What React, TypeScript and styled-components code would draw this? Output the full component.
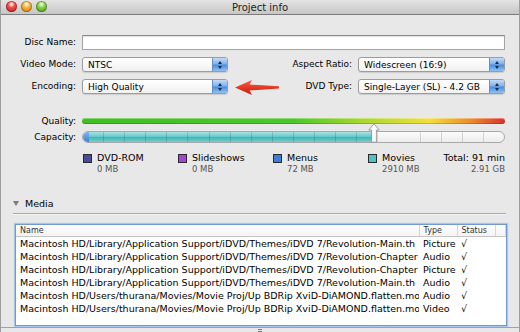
import styled, { createGlobalStyle } from 'styled-components';

const GlobalStyle = createGlobalStyle`
  html, body {
    margin: 0;
    padding: 0;
    background: #e8e8e8;
  }
  body {
    font-family: "DejaVu Sans", "Lucida Grande", sans-serif;
    color: #000;
  }
  * { box-sizing: border-box; }
`;

const Window = styled.div`
  width: 520px;
  height: 332px;
  overflow: hidden;
  background: #e8e8e8;
  border-left: 1px solid #9e9e9e;
  border-right: 1px solid #9e9e9e;
  display: flex;
  flex-direction: column;
`;

const TitleBar = styled.div`
  position: relative;
  height: 15px;
  flex: none;
  display: flex;
  align-items: center;
  justify-content: center;
  background: linear-gradient(#e4e4e4, #c6c6c6);
  border-bottom: 1px solid #7c7c7c;
`;

const Lights = styled.div`
  position: absolute;
  left: 5px;
  top: 1px;
  display: flex;
  gap: 4px;
`;

const Light = styled.span<{ $c1: string; $c2: string }>`
  width: 11px;
  height: 11px;
  border-radius: 50%;
  background: radial-gradient(circle at 50% 30%, #fff 0, ${(p) => p.$c1} 35%, ${(p) => p.$c2} 100%);
  box-shadow: inset 0 0 0 1px rgba(0, 0, 0, 0.25);
`;

const Title = styled.span`
  font-size: 10px;
  color: #222;
`;

const Form = styled.div`
  display: grid;
  grid-template-columns: 70px 146px 1fr 147px;
  grid-auto-rows: 15px;
  column-gap: 6px;
  row-gap: 7px;
  padding: 20px 14px 0 5px;
`;

const Label = styled.div`
  font-size: 9px;
  line-height: 15px;
  text-align: right;
  white-space: nowrap;
`;

const TextField = styled.div`
  grid-column: 2 / 5;
  background: #fff;
  border: 1px solid #a4a4a4;
  border-top-color: #888;
  box-shadow: inset 0 1px 1px rgba(0, 0, 0, 0.12);
`;

const Popup = styled.div`
  display: flex;
  align-items: center;
  border: 1px solid #9c9c9c;
  border-radius: 3px;
  background: linear-gradient(#ffffff, #f1f1f1);
  box-shadow: 0 1px 1px rgba(0, 0, 0, 0.12);
  overflow: hidden;
`;

const PopupText = styled.span`
  flex: 1;
  padding-left: 5px;
  font-size: 9px;
  white-space: nowrap;
`;

const Stepper = styled.span`
  width: 15px;
  align-self: stretch;
  display: flex;
  flex-direction: column;
  align-items: center;
  justify-content: center;
  gap: 2px;
  background: linear-gradient(#c6dcf6, #7fb2ec 45%, #4a8de0 55%, #8fc2f4);
  border-left: 1px solid #6a8fc4;
`;

const Tri = styled.span<{ $up?: boolean }>`
  width: 0;
  height: 0;
  border-left: 2px solid transparent;
  border-right: 2px solid transparent;
  ${(p) => (p.$up ? 'border-bottom: 3px solid #1c2a44;' : 'border-top: 3px solid #1c2a44;')}
`;

const ArrowCell = styled.div`
  display: flex;
  align-items: center;
  justify-content: space-between;
`;

const Meters = styled.div`
  display: grid;
  grid-template-columns: 70px 1fr;
  grid-auto-rows: 12px;
  column-gap: 6px;
  row-gap: 4px;
  padding: 21px 14px 0 5px;
`;

const MeterLabel = styled.div`
  font-size: 9px;
  line-height: 12px;
  text-align: right;
`;

const QualityBar = styled.div`
  align-self: center;
  height: 6px;
  border-radius: 3px;
  background: linear-gradient(
    to right,
    #3fbf22 0%,
    #4cc82a 50%,
    #a6d82e 66%,
    #f1e03a 82%,
    #ec8a2c 92%,
    #d8332a 100%
  );
  box-shadow: inset 0 -1px 0 rgba(0, 0, 0, 0.18), inset 0 1px 0 rgba(255, 255, 255, 0.35);
`;

const CapacityBar = styled.div`
  position: relative;
  height: 12px;
`;

const Track = styled.div`
  position: relative;
  height: 100%;
  display: flex;
  border: 1px solid #a9a9a9;
  border-radius: 6px;
  overflow: hidden;
  background: linear-gradient(#fbfbfb, #ececec);
`;

const Cap = styled.div`
  width: 6px;
  background: linear-gradient(#7eb4ee, #3a7fd8);
`;

const Fill = styled.div`
  background: linear-gradient(#a6e2e2, #62c7c8 50%, #45b6b8 55%, #74cfcf);
`;

const Segments = styled.div`
  position: absolute;
  inset: 0;
  background: repeating-linear-gradient(
    to right,
    transparent 0,
    transparent 20.1px,
    rgba(0, 0, 0, 0.14) 20.1px,
    rgba(0, 0, 0, 0.14) 21.1px
  );
`;

const Thumb = styled.svg`
  position: absolute;
  top: -8px;
  width: 12px;
  height: 20px;
`;

const Legend = styled.div`
  display: grid;
  grid-template-columns: 95px 95px 95px 1fr auto;
  padding: 9px 14px 0 82px;
`;

const LegendItem = styled.div`
  display: flex;
  gap: 5px;
`;

const Swatch = styled.span<{ $color: string }>`
  flex: none;
  width: 9px;
  height: 9px;
  margin-top: 2px;
  background: ${(p) => p.$color};
  border: 1px solid #2a2a2a;
`;

const LegendText = styled.div`
  display: flex;
  flex-direction: column;
  white-space: nowrap;
`;

const LegendName = styled.span`
  font-size: 9.5px;
  line-height: 12px;
`;

const LegendSize = styled.span`
  font-size: 8.5px;
  line-height: 10px;
  color: #555;
`;

const Total = styled(LegendText)`
  align-items: flex-end;
`;

const MediaHeader = styled.div`
  display: flex;
  align-items: center;
  gap: 6px;
  height: 12px;
  margin-top: 23px;
  padding-left: 12px;
  font-size: 9.5px;
`;

const Disclosure = styled.span`
  width: 0;
  height: 0;
  border-left: 3px solid transparent;
  border-right: 3px solid transparent;
  border-top: 5px solid #7a7a7a;
`;

const Separator = styled.div`
  margin: 4px 13px 0 12px;
  border-top: 1px solid #a8a8a8;
  border-bottom: 1px solid #f6f6f6;
`;

const ListBox = styled.div`
  margin: 9px 12px 0 14px;
  height: 102px;
  flex: none;
  background: #fff;
  border: 1px solid #7199d4;
  box-shadow: 0 0 1px 1px #a9c6ee;
  overflow: hidden;
`;

const Table = styled.table`
  width: 100%;
  table-layout: fixed;
  border-collapse: collapse;
`;

const Th = styled.th`
  height: 11px;
  padding: 0 4px;
  font-size: 8px;
  font-weight: normal;
  text-align: left;
  color: #333;
  background: linear-gradient(#ffffff, #f3f3f3);
  border-bottom: 1px solid #c4c4c4;
  border-right: 1px solid #d6d6d6;
`;

const Td = styled.td`
  height: 13px;
  padding: 0 4px;
  font-size: 9.5px;
  line-height: 13px;
  white-space: nowrap;
  overflow: hidden;
  text-overflow: clip;
`;

const BottomBar = styled.div`
  flex: 1;
  margin-top: 1px;
  display: flex;
  justify-content: center;
  border-top: 1px solid #a2a2a2;
`;

const Grip = styled.span`
  width: 4px;
  height: 3px;
  margin-top: 1px;
  border-top: 1px solid #777;
  border-bottom: 1px solid #777;
`;

function StepperIcon() {
  return (
    <Stepper>
      <Tri $up />
      <Tri />
    </Stepper>
  );
}

function PopupButton({ value }: { value: string }) {
  return (
    <Popup>
      <PopupText>{value}</PopupText>
      <StepperIcon />
    </Popup>
  );
}

const legend = [
  { name: 'DVD-ROM', size: '0 MB', color: '#4b4b9c' },
  { name: 'Slideshows', size: '0 MB', color: '#a545d6' },
  { name: 'Menus', size: '72 MB', color: '#3b7fd9' },
  { name: 'Movies', size: '2910 MB', color: '#4fc3c3' },
];

const rows = [
  ['Macintosh HD/Library/Application Support/iDVD/Themes/iDVD 7/Revolution-Main.th', 'Picture'],
  ['Macintosh HD/Library/Application Support/iDVD/Themes/iDVD 7/Revolution-Chapter', 'Audio'],
  ['Macintosh HD/Library/Application Support/iDVD/Themes/iDVD 7/Revolution-Chapter', 'Picture'],
  ['Macintosh HD/Library/Application Support/iDVD/Themes/iDVD 7/Revolution-Main.th', 'Audio'],
  ['Macintosh HD/Users/thurana/Movies/Movie Proj/Up BDRip XviD-DiAMOND.flatten.mo', 'Audio'],
  ['Macintosh HD/Users/thurana/Movies/Movie Proj/Up BDRip XviD-DiAMOND.flatten.mo', 'Video'],
];

const used = 69;

export default function App() {
  return (
    <>
      <GlobalStyle />
      <Window>
        <TitleBar>
          <Lights>
            <Light $c1="#f0504a" $c2="#b0171a" />
            <Light $c1="#f6b53a" $c2="#c4700c" />
            <Light $c1="#8ad24a" $c2="#3f8e16" />
          </Lights>
          <Title>Project info</Title>
        </TitleBar>

        <Form>
          <Label>Disc Name:</Label>
          <TextField />

          <Label>Video Mode:</Label>
          <PopupButton value="NTSC" />
          <Label>Aspect Ratio:</Label>
          <PopupButton value="Widescreen (16:9)" />

          <Label>Encoding:</Label>
          <PopupButton value="High Quality" />
          <ArrowCell>
            <svg width="46" height="16" viewBox="0 0 46 16">
              <defs>
                <linearGradient id="arrowRed" x1="0" y1="0" x2="0" y2="1">
                  <stop offset="0" stopColor="#ff5a40" />
                  <stop offset="1" stopColor="#c8180e" />
                </linearGradient>
              </defs>
              <path d="M1 8.5 L18 1 L15.5 5.6 L45 7.2 L45 9.6 L15.5 11.4 L18 16 Z" fill="url(#arrowRed)" />
            </svg>
            <Label>DVD Type:</Label>
          </ArrowCell>
          <PopupButton value="Single-Layer (SL) - 4.2 GB" />
        </Form>

        <Meters>
          <MeterLabel>Quality:</MeterLabel>
          <QualityBar />
          <MeterLabel>Capacity:</MeterLabel>
          <CapacityBar>
            <Track>
              <Cap />
              <Fill style={{ width: `calc(${used}% - 6px)` }} />
              <Segments />
            </Track>
            <Thumb viewBox="0 0 12 20" style={{ left: `calc(${used}% - 6px)` }}>
              <path
                d="M6 0.8 L11.2 7 L8.4 7 L8.4 19.2 L3.6 19.2 L3.6 7 L0.8 7 Z"
                fill="#fdfdfd"
                stroke="#8a8a8a"
                strokeWidth="0.8"
              />
            </Thumb>
          </CapacityBar>
        </Meters>

        <Legend>
          {legend.map((l) => (
            <LegendItem key={l.name}>
              <Swatch $color={l.color} />
              <LegendText>
                <LegendName>{l.name}</LegendName>
                <LegendSize>{l.size}</LegendSize>
              </LegendText>
            </LegendItem>
          ))}
          <Total>
            <LegendName>Total: 91 min</LegendName>
            <LegendSize>2.91 GB</LegendSize>
          </Total>
        </Legend>

        <MediaHeader>
          <Disclosure />
          <span>Media</span>
        </MediaHeader>
        <Separator />

        <ListBox>
          <Table>
            <colgroup>
              <col style={{ width: 403 }} />
              <col style={{ width: 38 }} />
              <col style={{ width: 38 }} />
              <col />
            </colgroup>
            <thead>
              <tr>
                <Th>Name</Th>
                <Th>Type</Th>
                <Th>Status</Th>
                <Th />
              </tr>
            </thead>
            <tbody>
              {rows.map(([name, type], i) => (
                <tr key={i}>
                  <Td>{name}</Td>
                  <Td>{type}</Td>
                  <Td>√</Td>
                  <Td />
                </tr>
              ))}
            </tbody>
          </Table>
        </ListBox>

        <BottomBar>
          <Grip />
        </BottomBar>
      </Window>
    </>
  );
}
